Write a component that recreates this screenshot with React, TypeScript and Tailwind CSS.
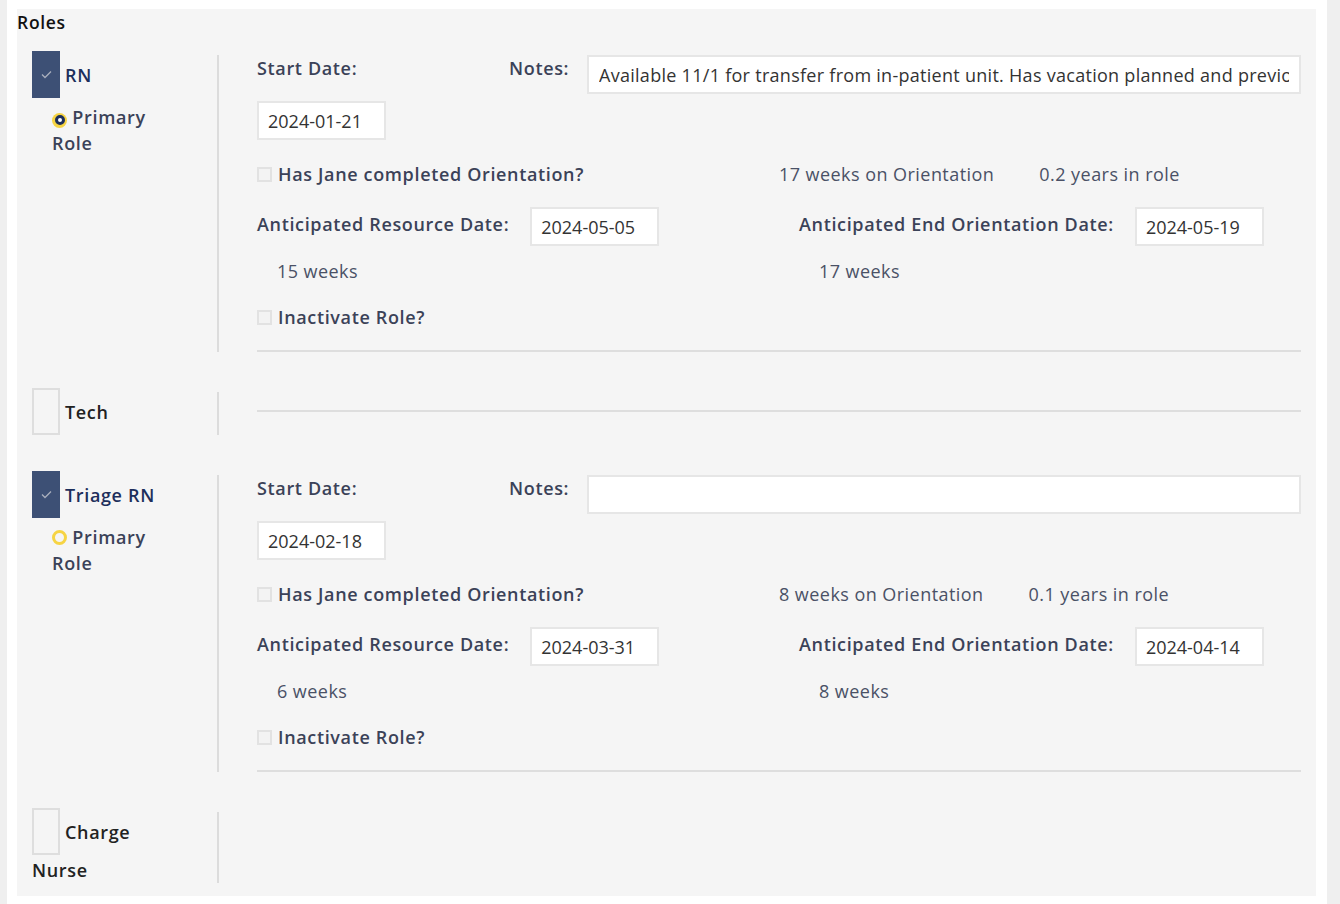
import { Fragment } from "react";

type RoleInfo = {
  name: string;
  checked: boolean;
  primary?: boolean;
  line?: boolean;
  detail?: {
    start: string;
    notes: string;
    weeksOn: string;
    years: string;
    resDate: string;
    resWeeks: string;
    endDate: string;
    endWeeks: string;
  };
};

const roles: RoleInfo[] = [
  {
    name: "RN",
    checked: true,
    primary: true,
    detail: {
      start: "2024-01-21",
      notes:
        "Available 11/1 for transfer from in-patient unit. Has vacation planned and previously requested time off",
      weeksOn: "17 weeks on Orientation",
      years: "0.2 years in role",
      resDate: "2024-05-05",
      resWeeks: "15 weeks",
      endDate: "2024-05-19",
      endWeeks: "17 weeks",
    },
  },
  { name: "Tech", checked: false, line: true },
  {
    name: "Triage RN",
    checked: true,
    primary: false,
    detail: {
      start: "2024-02-18",
      notes: "",
      weeksOn: "8 weeks on Orientation",
      years: "0.1 years in role",
      resDate: "2024-03-31",
      resWeeks: "6 weeks",
      endDate: "2024-04-14",
      endWeeks: "8 weeks",
    },
  },
  { name: "Charge Nurse", checked: false },
];

const label = "font-semibold tracking-[0.65px] text-[#3b4258]";
const plain = "tracking-[0.45px] text-[#4a5166]";
const inputBase =
  "h-[39px] border-2 border-[#e6e6e6] bg-white text-[18px] text-[#333] outline-none";

function SmallBox() {
  return (
    <span className="inline-block h-[15px] w-[15px] shrink-0 border-2 border-[#e2e2e2] bg-[#f3f3f3]" />
  );
}

function Radio({ on }: { on: boolean }) {
  return on ? (
    <span className="inline-flex h-[15px] w-[15px] items-center justify-center rounded-full bg-[#f6d444] align-[-1px]">
      <span className="h-[10px] w-[10px] rounded-full border-[3px] border-[#1d2f5c] bg-white" />
    </span>
  ) : (
    <span className="inline-block h-[15px] w-[15px] rounded-full border-[3px] border-[#f6d444] bg-[#f5f5f5] align-[-1px]" />
  );
}

function DateBox({ value, className = "" }: { value: string; className?: string }) {
  return (
    <input
      readOnly
      value={value}
      className={`w-[129px] px-[9px] tracking-normal ${inputBase} ${className}`}
    />
  );
}

function Detail({ d }: { d: NonNullable<RoleInfo["detail"]> }) {
  return (
    <div className="flex-1">
      <div className="flex">
        <div className="w-[252px]">
          <div className={`pt-[1px] leading-[24px] ${label}`}>Start Date:</div>
          <DateBox value={d.start} className="mt-[21px]" />
        </div>
        <div className="flex flex-1 items-start">
          <span className={`w-[78px] pt-[1px] leading-[24px] ${label}`}>Notes:</span>
          <input
            readOnly
            value={d.notes}
            className={`min-w-0 flex-1 px-[10px] tracking-[0.28px] ${inputBase}`}
          />
        </div>
      </div>

      <div className="mt-[22px] grid grid-cols-2 leading-[24px]">
        <div className="flex items-center gap-[6px]">
          <SmallBox />
          <span className={label}>Has Jane completed Orientation?</span>
        </div>
        <div className={plain}>
          <span>{d.weeksOn}</span>
          <span className="ml-[45px]">{d.years}</span>
        </div>
      </div>

      <div className="mt-[21px] grid grid-cols-2">
        <div className="flex items-start">
          <span className={`pt-[5px] leading-[24px] ${label}`}>Anticipated Resource Date:</span>
          <DateBox value={d.resDate} className="ml-[21px]" />
        </div>
        <div className="flex items-start pl-[20px]">
          <span className={`pt-[5px] leading-[24px] ${label}`}>Anticipated End Orientation Date:</span>
          <DateBox value={d.endDate} className="ml-[21px]" />
        </div>
      </div>

      <div className={`mt-[13px] grid grid-cols-2 leading-[24px] ${plain}`}>
        <span className="pl-[20px]">{d.resWeeks}</span>
        <span className="pl-[40px]">{d.endWeeks}</span>
      </div>

      <div className="mt-[22px] flex items-center gap-[6px] leading-[24px]">
        <SmallBox />
        <span className={label}>Inactivate Role?</span>
      </div>

      <div className="mt-[21px] h-[2px] bg-[#dedede]" />
    </div>
  );
}

function RoleRow({ r }: { r: RoleInfo }) {
  const words = r.name.split(" ");
  return (
    <div className="flex">
      <div className="w-[187px] shrink-0 border-r-2 border-[#dcdcdc]">
        <div className="-mt-[4px] w-[140px] leading-[26px]">
          {r.checked ? (
            <span className="inline-flex h-[47px] w-[28px] items-center justify-center bg-[#3d5075] align-middle">
              <svg width="11" height="9" viewBox="0 0 11 9" fill="none">
                <path d="M1 4.5 4 7.5 10 1.5" stroke="#a9afbd" strokeWidth="1.3" />
              </svg>
            </span>
          ) : (
            <span className="inline-block h-[47px] w-[28px] border-2 border-[#dedede] align-middle" />
          )}
          <span
            className={`ml-[5px] align-middle font-semibold tracking-[0.65px] ${
              r.checked ? "text-[#1d2f5c]" : "text-[#222]"
            }`}
          >
            {words.map((w, i) => (
              <Fragment key={i}>
                {i > 0 && " "}
                {w}
              </Fragment>
            ))}
          </span>
          {r.detail && (
            <div className={`mt-[6px] pl-[20px] ${label}`}>
              <Radio on={!!r.primary} /> <span>Primary</span>
              <br />
              Role
            </div>
          )}
        </div>
      </div>
      <div className="ml-[38px] flex flex-1">
        {r.detail ? (
          <Detail d={r.detail} />
        ) : r.line ? (
          <div className="mt-[18px] h-[2px] flex-1 self-start bg-[#dedede]" />
        ) : null}
      </div>
    </div>
  );
}

export default function App() {
  return (
    <div
      className="flex h-[904px] w-[1340px] bg-white text-[18px]"
      style={{ fontFamily: '"Open Sans", "Liberation Sans", sans-serif' }}
    >
      <div className="w-[7px] bg-[#efefef]" />
      <div className="ml-[10px] mt-[9px] flex h-[887px] w-[1299px] flex-col bg-[#f5f5f5] pr-[15px]">
        <div className="pt-[1px] text-[17.5px] font-semibold leading-[24px] tracking-[0.7px] text-[#111]">
          Roles
        </div>
        <div className="mt-[21px] flex flex-col gap-[40px] pl-[15px]">
          {roles.map((r) => (
            <RoleRow key={r.name} r={r} />
          ))}
        </div>
      </div>
      <div className="ml-[11px] w-[13px] bg-[#efefef]" />
    </div>
  );
}
